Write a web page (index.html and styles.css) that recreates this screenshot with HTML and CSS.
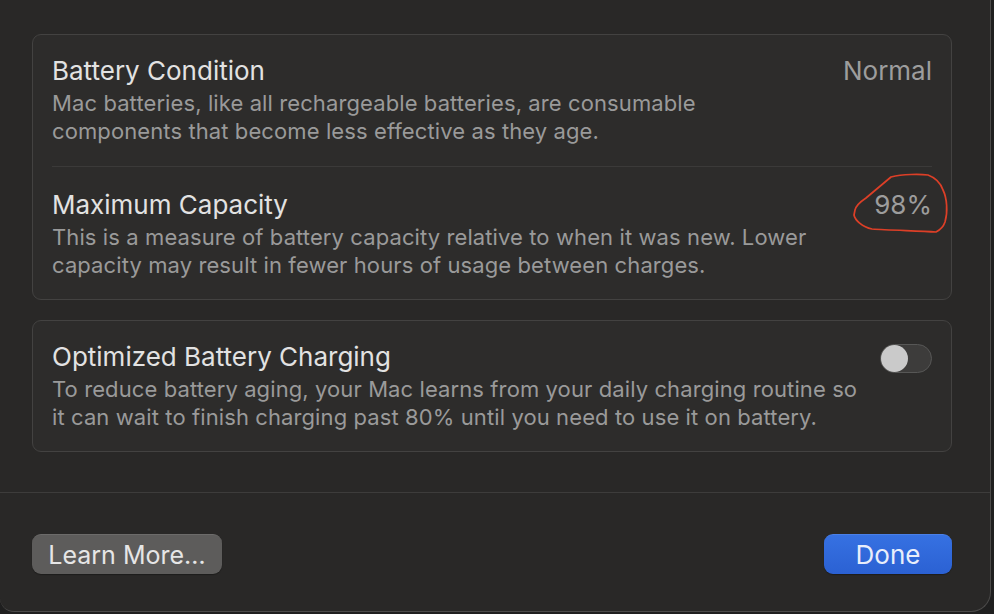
FILE: index.html
```html
<!DOCTYPE html>
<html>
<head>
    <title>Battery Health</title>
    <link rel="stylesheet" href="styles.css">
</head>
<body>
    <div class="window">
        <div class="content">
            <div class="card">
                <div class="row">
                    <div class="text">
                        <div class="title">Battery Condition</div>
                        <div class="desc">Mac batteries, like all rechargeable batteries, are consumable<br>components that become less effective as they age.</div>
                    </div>
                    <div class="value">Normal</div>
                </div>
                <div class="divider"></div>
                <div class="row second">
                    <div class="text">
                        <div class="title">Maximum Capacity</div>
                        <div class="desc">This is a measure of battery capacity relative to when it was new. Lower<br>capacity may result in fewer hours of usage between charges.</div>
                    </div>
                    <div class="value circled">98%
                        <svg class="scribble" width="104" height="68" viewBox="0 0 104 68">
                            <path d="M7 40 C8 36, 12 32, 18 28 L43 7 C55 4, 72 4, 80 5 C88 8, 93 14, 95 20 C99 28, 100 42, 97 52 C95 58, 92 60, 88 62 C70 61, 40 60, 24 59 C14 57, 7 50, 6 45 Z" fill="none" stroke="#dc3f27" stroke-width="1.7" stroke-linejoin="round"/>
                        </svg>
                    </div>
                </div>
            </div>

            <div class="card">
                <div class="row single">
                    <div class="text">
                        <div class="title">Optimized Battery Charging</div>
                        <div class="desc">To reduce battery aging, your Mac learns from your daily charging routine so<br>it can wait to finish charging past 80% until you need to use it on battery.</div>
                    </div>
                    <div class="toggle"><div class="knob"></div></div>
                </div>
            </div>
        </div>

        <div class="footer">
            <button class="btn">Learn More…</button>
            <button class="btn primary">Done</button>
        </div>
    </div>
</body>
</html>
```

FILE: styles.css
```css
body {
    margin: 0;
    background-color: #1f1f1f;
    font-family: Inter, "Noto Sans", sans-serif;
    -webkit-font-smoothing: antialiased;
}

.window {
    width: 990px;
    height: 611px;
    background-color: #292827;
    border-right: 1px solid #4b4a49;
    border-bottom: 1px solid #4b4a49;
    border-bottom-right-radius: 20px;
    border-bottom-left-radius: 14px;
    display: flex;
    flex-direction: column;
}

.content {
    padding: 34px 38px 40px 32px;
    display: flex;
    flex-direction: column;
    gap: 20px;
    border-bottom: 1px solid #3d3c3b;
}

.card {
    background-color: #2d2c2b;
    border: 1px solid #434241;
    border-radius: 9px;
}

.row {
    display: flex;
    justify-content: space-between;
    align-items: flex-start;
    padding: 20px 19px 21px 19px;
}

.row.second {
    padding-top: 22px;
    padding-bottom: 20px;
}

.row.single {
    padding-bottom: 20px;
}

.divider {
    height: 1px;
    margin: 0 19px;
    background-color: #3b3a39;
}

.title {
    font-size: 26px;
    line-height: 32px;
    color: #e2e2e2;
    margin-bottom: 2px;
}

.desc {
    font-size: 22px;
    line-height: 28px;
    letter-spacing: 0.1px;
    color: #9a9a9a;
    white-space: nowrap;
}

.value {
    font-size: 26px;
    line-height: 32px;
    color: #9d9d9d;
}

.circled {
    position: relative;
}

.scribble {
    position: absolute;
    left: -26px;
    top: -19px;
}

.toggle {
    width: 50px;
    height: 27px;
    margin-top: 3px;
    border: 1px solid #575756;
    border-radius: 15px;
    background-color: #3d3c3b;
    position: relative;
}

.knob {
    position: absolute;
    left: 0;
    top: 0;
    width: 27px;
    height: 27px;
    border-radius: 50%;
    background-color: #cacaca;
}

.footer {
    display: flex;
    justify-content: space-between;
    padding: 41px 38px 0 32px;
}

.btn {
    width: 190px;
    height: 40px;
    padding: 0;
    font-family: Inter, "Noto Sans", sans-serif;
    font-size: 25px;
    line-height: 38px;
    color: #e6e6e6;
    background-color: #5d5c5b;
    border: none;
    border-top: 1px solid #6c6b6a;
    border-radius: 9px;
    box-shadow: 0 1px 1px rgba(0, 0, 0, 0.3);
}

.btn.primary {
    width: 128px;
    font-size: 26px;
    color: #e9eefb;
    background: linear-gradient(#3671e2, #2b61d3);
    border-top: 1px solid #4a80e8;
}
```
